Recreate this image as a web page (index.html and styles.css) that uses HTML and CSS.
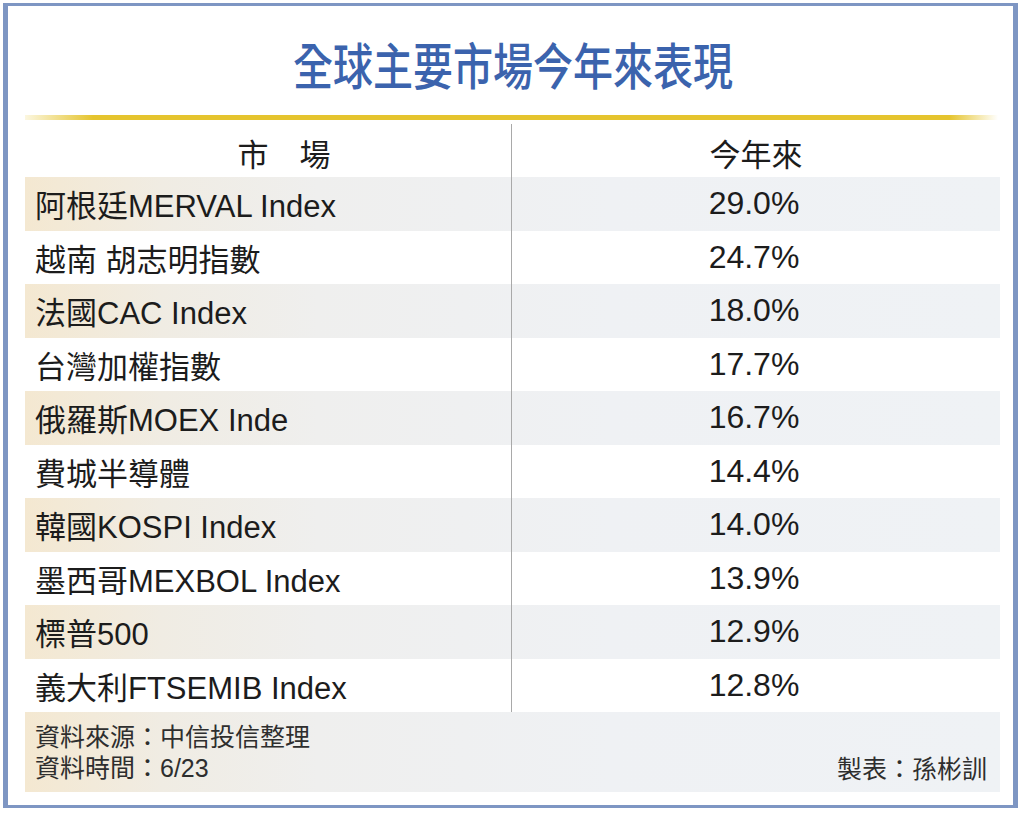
FILE: index.html
```html
<!DOCTYPE html>
<html lang="zh-Hant">
<head>
<meta charset="utf-8">
<title>全球主要市場今年來表現</title>
<link rel="stylesheet" href="styles.css">
</head>
<body>
<div class="frame">
  <header class="title-wrap"><h1 class="title">全球主要市場今年來表現</h1></header>
  <div class="rule"></div>
  <div class="table">
    <div class="row head"><div class="c1">市　場</div><div class="c2">今年來</div></div>
    <div class="row odd"><div class="c1">阿根廷MERVAL Index</div><div class="c2">29.0%</div></div>
    <div class="row"><div class="c1">越南 胡志明指數</div><div class="c2">24.7%</div></div>
    <div class="row odd"><div class="c1">法國CAC Index</div><div class="c2">18.0%</div></div>
    <div class="row"><div class="c1">台灣加權指數</div><div class="c2">17.7%</div></div>
    <div class="row odd"><div class="c1">俄羅斯MOEX Inde</div><div class="c2">16.7%</div></div>
    <div class="row"><div class="c1">費城半導體</div><div class="c2">14.4%</div></div>
    <div class="row odd"><div class="c1">韓國KOSPI Index</div><div class="c2">14.0%</div></div>
    <div class="row"><div class="c1">墨西哥MEXBOL Index</div><div class="c2">13.9%</div></div>
    <div class="row odd"><div class="c1">標普500</div><div class="c2">12.9%</div></div>
    <div class="row"><div class="c1">義大利FTSEMIB Index</div><div class="c2">12.8%</div></div>
  </div>
  <footer class="foot">
    <div class="notes">
      <p>資料來源：中信投信整理</p>
      <p>資料時間：6/23</p>
    </div>
    <div class="author">製表：孫彬訓</div>
  </footer>
</div>
</body>
</html>
```
FILE: styles.css
```css
* { box-sizing: border-box; }
body {
  margin: 0;
  background: #ffffff;
  font-family: "Liberation Sans", "Noto Sans CJK TC", sans-serif;
  color: #1c1c1c;
}
.frame {
  width: 1015px;
  height: 805px;
  margin: 3px 0 0 3px;
  border-style: solid;
  border-color: #7e96c3;
  border-width: 3px 5px 3px 5px;
  padding: 0 13px 0 17px;
  background: #ffffff;
}
.title-wrap {
  height: 109px;
  display: flex;
  align-items: center;
  justify-content: center;
}
.title {
  margin: 0;
  display: inline-block;
  font-family: "Noto Sans CJK TC", sans-serif;
  font-size: 50px;
  font-weight: 500;
  line-height: 1;
  color: #3b63ad;
  transform: scaleX(0.8);
  padding-top: 4px;
}
.rule {
  height: 5px;
  margin-right: 2px;
  background: linear-gradient(90deg, rgba(232, 200, 50, 0.15) 0%, #e5c42e 7%, #e5c42e 95%, rgba(232, 200, 50, 0) 100%);
}
.table { margin-top: 4px; }
.row {
  display: grid;
  grid-template-columns: 486px 1fr;
  height: 53.5px;
}
.row.head { height: 53px; }
.c1 {
  display: flex;
  align-items: center;
  padding-left: 10px;
  font-size: 31px;
  white-space: nowrap;
}
.c2 {
  display: flex;
  align-items: center;
  justify-content: center;
  border-left: 1px solid #a9a9a9;
  font-size: 32px;
  padding-right: 4px;
}
.head .c1, .head .c2 {
  font-family: "Noto Sans CJK TC", sans-serif;
  font-size: 31px;
  padding-top: 4px;
}
.head .c1 {
  justify-content: center;
  padding-left: 32px;
}
.head .c2 { padding-right: 0; }
.odd {
  background: linear-gradient(90deg, #f4e8d1 0%, #f0ece3 14%, #efefee 30%, #eff1f4 60%, #eff2f5 100%);
}
.foot {
  height: 80px;
  display: flex;
  justify-content: space-between;
  padding: 10px 13px 7px 10px;
  background: linear-gradient(90deg, #f4e8d1 0%, #f0ece3 14%, #efefee 30%, #eff1f4 60%, #eff2f5 100%);
  font-size: 25px;
  line-height: 31px;
  color: #2e2e2e;
}
.notes p { margin: 0; }
.author { align-self: flex-end; }
```
